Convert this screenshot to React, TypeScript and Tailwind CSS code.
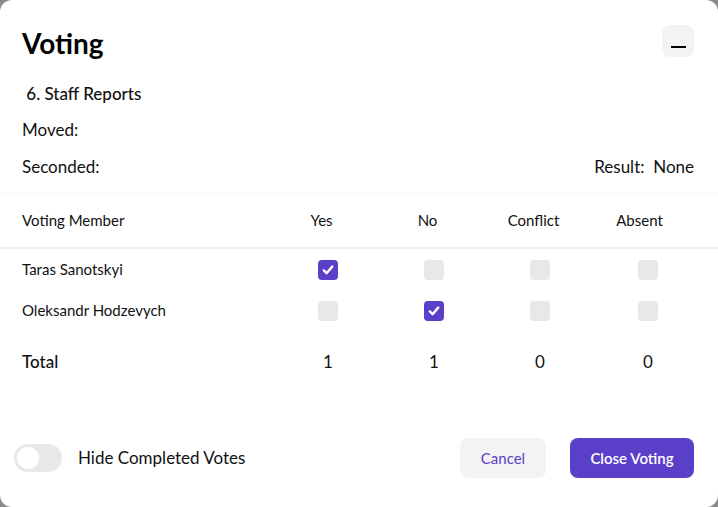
import React, { useState } from 'react';

// 투표 멤버 데이터
type Vote = 'yes' | 'no' | 'conflict' | 'absent' | null;

interface Member {
  name: string;
  vote: Vote;
}

const columns: { key: Exclude<Vote, null>; label: string }[] = [
  { key: 'yes', label: 'Yes' },
  { key: 'no', label: 'No' },
  { key: 'conflict', label: 'Conflict' },
  { key: 'absent', label: 'Absent' },
];

function VoteBox({ checked, onClick }: { checked: boolean; onClick: () => void }) {
  return (
    <button
      type="button"
      onClick={onClick}
      className={`w-5 h-5 rounded-[4px] flex items-center justify-center ${
        checked ? 'bg-[#5a3fc9]' : 'bg-[#e8e8ea]'
      }`}
    >
      {checked && (
        <svg width="14" height="14" viewBox="0 0 14 14" fill="none">
          <path d="M2.8 7.4 L5.6 10.2 L11.2 3.6" stroke="white" strokeWidth="2.4" strokeLinecap="round" strokeLinejoin="round" />
        </svg>
      )}
    </button>
  );
}

export default function App() {
  const [members, setMembers] = useState<Member[]>([
    { name: 'Taras Sanotskyi', vote: 'yes' },
    { name: 'Oleksandr Hodzevych', vote: 'no' },
  ]);
  const [hideCompleted, setHideCompleted] = useState(false);

  const setVote = (idx: number, vote: Exclude<Vote, null>) => {
    setMembers((prev) =>
      prev.map((m, i) => (i === idx ? { ...m, vote: m.vote === vote ? null : vote } : m))
    );
  };

  const total = (key: Exclude<Vote, null>) => members.filter((m) => m.vote === key).length;

  return (
    <div className="w-[718px] h-[507px] bg-[#8c8c8c] font-['Lato','Noto_Sans',sans-serif] text-[#111]">
      <div className="w-full h-full bg-white rounded-[12px] flex flex-col">
        {/* 헤더 */}
        <div className="flex items-start justify-between pl-[22px] pr-[24px] pt-[25px]">
          <h1 className="text-[28px] font-bold leading-[36px] text-black">Voting</h1>
          <button
            type="button"
            className="w-8 h-8 rounded-lg bg-[#f3f3f4] flex items-center justify-center"
          >
            <span className="block w-[15px] h-[2px] bg-black mt-[11px]" />
          </button>
        </div>

        {/* 안건 정보 */}
        <div className="pl-[22px] pr-[24px] text-[17px]">
          <div className="mt-[22px] font-medium leading-[22px]">&nbsp;6. Staff Reports</div>
          <div className="mt-[14px] leading-[22px]">Moved:</div>
          <div className="mt-[15px] leading-[22px] flex justify-between">
            <span>Seconded:</span>
            <span>
              Result:&nbsp; None
            </span>
          </div>
        </div>

        {/* 투표 테이블 */}
        <div className="mt-[15px] border-t border-[#f9f9f9]">
          <div className="grid grid-cols-[253px_106px_106px_106px_110px] pl-[22px] items-center h-[55px] text-[15px] border-b-2 border-[#efefef]">
            <div>Voting Member</div>
            {columns.map((c, i) => (
              <div key={c.key} className={`text-center ${i === 3 ? 'pr-[17px]' : 'pr-[13px]'}`}>
                {c.label}
              </div>
            ))}
          </div>

          {members.map((m, idx) => (
            <div
              key={m.name}
              className="grid grid-cols-[253px_106px_106px_106px_110px] pl-[22px] items-center h-[41px] text-[15px]"
            >
              <div>{m.name}</div>
              {columns.map((c) => (
                <div key={c.key} className="flex justify-center">
                  <VoteBox checked={m.vote === c.key} onClick={() => setVote(idx, c.key)} />
                </div>
              ))}
            </div>
          ))}

          <div className="grid grid-cols-[253px_106px_106px_106px_110px] pl-[22px] items-center h-[40px] mt-[11px] text-[17px]">
            <div className="font-medium">Total</div>
            {columns.map((c) => (
              <div key={c.key} className="text-center">
                {total(c.key)}
              </div>
            ))}
          </div>
        </div>

        {/* 하단 버튼 */}
        <div className="mt-auto mb-[29px] flex items-center justify-between pl-[14px] pr-[24px]">
          <div className="flex items-center gap-4">
            <button
              type="button"
              onClick={() => setHideCompleted(!hideCompleted)}
              className={`w-12 h-7 rounded-full p-[3px] flex ${
                hideCompleted ? 'bg-[#5a3fc9] justify-end' : 'bg-[#e8e8ea] justify-start'
              }`}
            >
              <span className="block w-[22px] h-[22px] rounded-full bg-white" />
            </button>
            <span className="text-[17px]">Hide Completed Votes</span>
          </div>
          <div className="flex items-center gap-6">
            <button
              type="button"
              className="w-[86px] h-10 rounded-lg bg-[#f3f3f4] text-[#5a3fc9] text-[15px]"
            >
              Cancel
            </button>
            <button
              type="button"
              className="w-[124px] h-10 rounded-lg bg-[#5a3fc9] text-white text-[15px] font-semibold"
            >
              Close Voting
            </button>
          </div>
        </div>
      </div>
    </div>
  );
}
